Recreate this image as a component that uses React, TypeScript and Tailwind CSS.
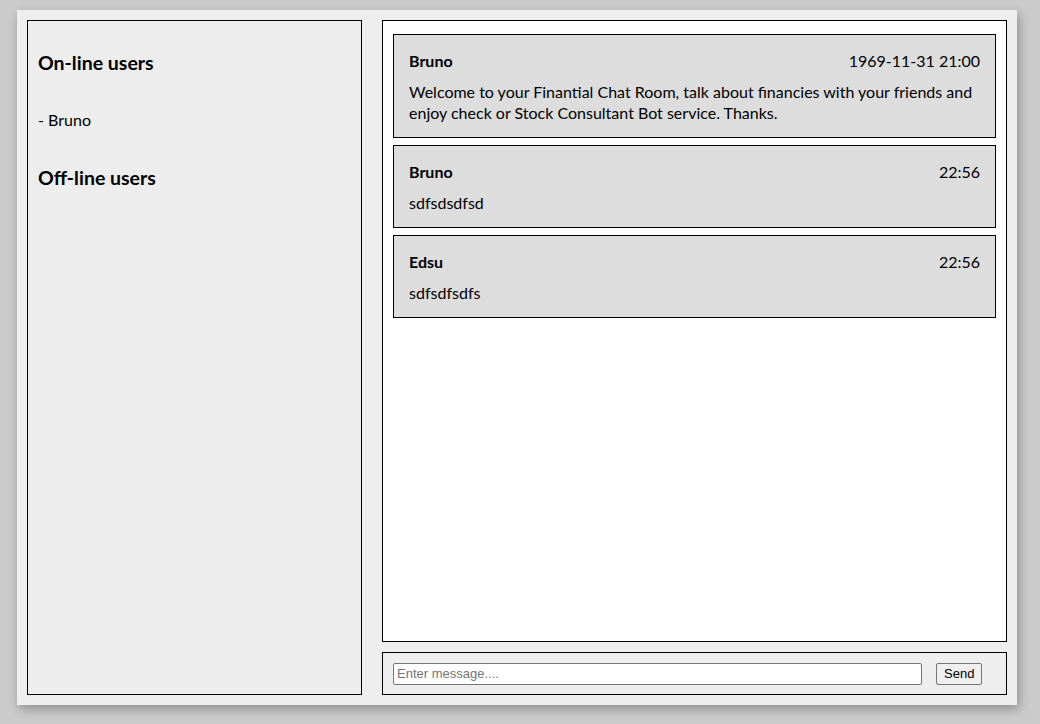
import React from 'react';

const MESSAGES = [
  {
    id: 1,
    user: 'Bruno',
    time: '1969-11-31 21:00',
    text: 'Welcome to your Finantial Chat Room, talk about financies with your friends and enjoy check or Stock Consultant Bot service. Thanks.',
  },
  { id: 2, user: 'Bruno', time: '22:56', text: 'sdfsdsdfsd' },
  { id: 3, user: 'Edsu', time: '22:56', text: 'sdfsdfsdfs' },
];

export default function App() {
  return (
    <div className="w-[1040px] h-[724px] bg-[#cbcbcb] pt-[10px] pl-[17px] font-['Lato','Open_Sans',sans-serif] text-black">
      <div className="w-[1000px] h-[695px] bg-[#eeeeee] shadow-[2px_4px_10px_rgba(0,0,0,0.3)] p-[10px] flex gap-[20px]">
        {/* Users sidebar */}
        <aside className="w-[335px] h-[675px] border border-black bg-[#ededed] px-[10px]">
          <h3 className="mt-[31px] text-[19.5px] leading-[22px] font-bold">On-line users</h3>
          <p className="mt-[35px] text-[16px] leading-[21px]">- Bruno</p>
          <h3 className="mt-[37px] text-[19.5px] leading-[22px] font-bold">Off-line users</h3>
        </aside>

        <div className="flex-1 flex flex-col gap-[10px]">
          {/* Messages */}
          <div className="h-[622px] border border-black bg-white px-[10px] pt-[13px] flex flex-col gap-[7px]">
            {MESSAGES.map((m) => (
              <div key={m.id} className="border border-black bg-[#dddddd] pt-[15px] pb-[14px] px-[15px] text-[16px] leading-[21px]">
                <div className="flex justify-between">
                  <span className="font-bold">{m.user}</span>
                  <span>{m.time}</span>
                </div>
                <p className="mt-[10px]">{m.text}</p>
              </div>
            ))}
          </div>

          {/* Input bar */}
          <div className="h-[43px] border border-black bg-[#eeeeee] flex items-center pl-[10px] pr-[23px] gap-[14px] font-['Liberation_Sans',Arial,sans-serif] text-[13px]">
            <input
              type="text"
              placeholder="Enter message...."
              className="w-[529px] h-[22px] border border-[#767676] rounded-[2px] bg-white px-[3px] placeholder:text-[#757575]"
            />
            <button className="h-[22px] px-[7px] border border-[#767676] rounded-[2px] bg-[#efefef] leading-none">Send</button>
          </div>
        </div>
      </div>
    </div>
  );
}
